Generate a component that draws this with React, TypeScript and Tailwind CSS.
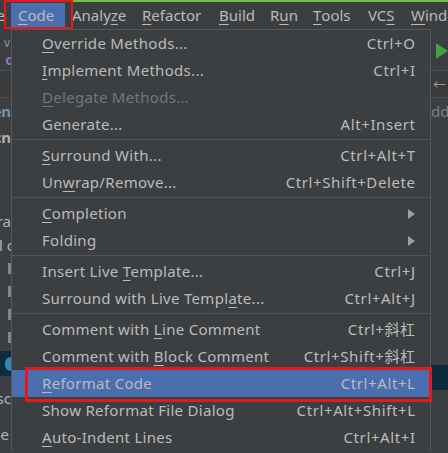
import React from 'react';

type MenuItem =
  | { kind: 'sep' }
  | {
      kind: 'item';
      label: string;
      mn?: number;
      shortcut?: string;
      disabled?: boolean;
      submenu?: boolean;
      active?: boolean;
    };

const items: MenuItem[] = [
  { kind: 'item', label: 'Override Methods...', mn: 0, shortcut: 'Ctrl+O' },
  { kind: 'item', label: 'Implement Methods...', mn: 0, shortcut: 'Ctrl+I' },
  { kind: 'item', label: 'Delegate Methods...', mn: 0, disabled: true },
  { kind: 'item', label: 'Generate...', shortcut: 'Alt+Insert' },
  { kind: 'sep' },
  { kind: 'item', label: 'Surround With...', mn: 0, shortcut: 'Ctrl+Alt+T' },
  { kind: 'item', label: 'Unwrap/Remove...', mn: 2, shortcut: 'Ctrl+Shift+Delete' },
  { kind: 'sep' },
  { kind: 'item', label: 'Completion', mn: 0, submenu: true },
  { kind: 'item', label: 'Folding', submenu: true },
  { kind: 'sep' },
  { kind: 'item', label: 'Insert Live Template...', mn: 12, shortcut: 'Ctrl+J' },
  { kind: 'item', label: 'Surround with Live Template...', mn: 24, shortcut: 'Ctrl+Alt+J' },
  { kind: 'sep' },
  { kind: 'item', label: 'Comment with Line Comment', mn: 13, shortcut: 'Ctrl+斜杠' },
  { kind: 'item', label: 'Comment with Block Comment', mn: 13, shortcut: 'Ctrl+Shift+斜杠' },
  { kind: 'item', label: 'Reformat Code', mn: 0, shortcut: 'Ctrl+Alt+L', active: true },
  { kind: 'item', label: 'Show Reformat File Dialog', shortcut: 'Ctrl+Alt+Shift+L' },
  { kind: 'item', label: 'Auto-Indent Lines', mn: 0, shortcut: 'Ctrl+Alt+I' },
];

const menuBar = [
  { label: 'Code', mn: 0, w: 'w-[54px]', active: true },
  { label: 'Analyze', mn: 5, w: 'w-[70px]' },
  { label: 'Refactor', mn: 0, w: 'w-[77px]' },
  { label: 'Build', mn: 0, w: 'w-[51px]' },
  { label: 'Run', mn: 1, w: 'w-[43px]' },
  { label: 'Tools', mn: 0, w: 'w-[55px]' },
  { label: 'VCS', mn: 2, w: 'w-[43px]' },
  { label: 'Window', mn: 0, w: 'w-[60px]' },
];

// underline the mnemonic letter
const withMnemonic = (label: string, mn?: number) => {
  if (mn === undefined) return label;
  return (
    <>
      {label.slice(0, mn)}
      <span className="underline underline-offset-[3px] decoration-1">{label[mn]}</span>
      {label.slice(mn + 1)}
    </>
  );
};

const SubArrow = () => (
  <svg width="7" height="10" viewBox="0 0 7 10">
    <path d="M0 0 L7 5 L0 10 Z" fill="#9da0a3" />
  </svg>
);

const LeftStrip = () => (
  <div className="w-[11px] shrink-0 flex flex-col overflow-hidden text-[15px] leading-none">
    <div className="h-[41px] flex flex-col items-end pt-[8px]">
      <span className="text-[#8d9296] text-[12px] mr-[1px] h-[13px]">v</span>
      <span className="text-[#9876aa] font-bold text-[14px] mr-[-3px] mt-[3px]">o</span>
    </div>
    <div className="h-px bg-[#4b4e51]" />
    <div className="h-[26px] bg-[#393b3d]" />
    <div className="h-px bg-[#4b4e51]" />
    <div className="h-[26px] flex items-center justify-end whitespace-nowrap font-bold text-[#d4d4d4]">
      e<span className="text-[#6897bb]">n</span>
    </div>
    <div className="h-[26px] flex items-center justify-end whitespace-nowrap font-bold text-[#d4d4d4]">
      c<span className="text-[#b0b0b0]">n</span>
    </div>
    <div className="h-[59px]" />
    <div className="h-[24px] flex items-center justify-end whitespace-nowrap text-[#a9b7c6]">ra</div>
    <div className="h-[24px] flex items-center justify-end whitespace-nowrap text-[#a9b7c6] mr-[-3px]">l c</div>
    <div className="flex flex-col gap-[12px] pt-[6px] items-end">
      <div className="w-[3px] h-[11px] bg-[#7f878d]" />
      <div className="w-[3px] h-[11px] bg-[#7f878d]" />
      <div className="w-[3px] h-[11px] bg-[#7f878d]" />
      <div className="w-[3px] h-[11px] bg-[#7f878d]" />
    </div>
    <div className="h-[8px]" />
    <div className="h-[25px] bg-[#0f2a3d] flex items-center justify-end">
      <div className="w-[6px] h-[14px] rounded-l-full bg-[#2b8ab8]" />
    </div>
    <div className="h-[10px]" />
    <div className="h-[24px] flex items-center justify-end whitespace-nowrap text-[#a9b7c6]">sc</div>
    <div className="h-[12px]" />
    <div className="h-[24px] flex items-center justify-end whitespace-nowrap text-[#a9b7c6] mr-[2px]">e</div>
  </div>
);

const RightStrip = () => (
  <div className="flex-1 flex flex-col overflow-hidden text-[15px] leading-none">
    <div className="h-[41px] flex items-center pl-[5px] pt-[2px]">
      <svg width="14" height="18" viewBox="0 0 14 18">
        <path d="M0 0 L14 9 L0 18 Z" fill="#3fa43c" />
      </svg>
    </div>
    <div className="h-px bg-[#4b4e51]" />
    <div className="h-[26px] bg-[#393b3d] flex items-center pl-[2px] text-[#9a9da0] text-[13px]">←</div>
    <div className="h-px bg-[#4b4e51]" />
    <div className="h-[26px] flex items-center whitespace-nowrap text-[#7d8083]">dd</div>
    <div className="h-[241px]" />
    <div className="h-[25px] bg-[#0f2a3d]" />
  </div>
);

export default function App() {
  return (
    <div className="relative w-[448px] h-[453px] overflow-hidden bg-[#3c3f41] font-['Noto_Sans','Noto_Sans_CJK_SC',sans-serif] text-[15px] text-[#bbbbbb]">
      {/* window accent line */}
      <div className="flex h-[2px]">
        <div className="w-[72px]" />
        <div className="flex-1 bg-[#6fbf40]" />
      </div>

      {/* menu bar */}
      <div className="flex h-[27px] items-center whitespace-nowrap">
        <div className="w-[11px] shrink-0 h-full flex items-center justify-end overflow-hidden">
          <span className="mr-[6px]">e</span>
        </div>
        {menuBar.map((m) => (
          <div
            key={m.label}
            className={`${m.w} shrink-0 h-[25px] flex items-center pl-[7px] ${
              m.active ? 'bg-[#4b6eaf]' : ''
            }`}
          >
            {withMnemonic(m.label, m.mn)}
          </div>
        ))}
      </div>

      <div className="flex">
        <LeftStrip />

        {/* dropdown */}
        <div className="w-[420px] shrink-0 border-x border-t border-[#555759] bg-[#3c3f41]">
          {items.map((it, i) =>
            it.kind === 'sep' ? (
              <div key={i} className="h-[4px] pt-[1px]">
                <div className="h-px bg-[#515456]" />
              </div>
            ) : (
              <div
                key={i}
                className={`h-[27px] flex items-center justify-between pl-[30px] pr-[15px] whitespace-nowrap ${
                  it.active ? 'bg-[#4b6eaf]' : ''
                } ${it.disabled ? 'text-[#72767a]' : ''}`}
              >
                <span className="tracking-[0.3px]">{withMnemonic(it.label, it.mn)}</span>
                {it.shortcut && <span className="tracking-[0.6px] mr-[-0.6px]">{it.shortcut}</span>}
                {it.submenu && <SubArrow />}
              </div>
            )
          )}
        </div>

        <RightStrip />
      </div>

      {/* highlight frames drawn on top of the screenshot */}
      <div className="absolute left-[4px] top-0 w-[69px] h-[29px] border-[2px] border-[#e3191c]" />
      <div className="absolute left-[25px] top-[367px] w-[407px] h-[35px] border-[3px] border-[#e3191c]" />
    </div>
  );
}
